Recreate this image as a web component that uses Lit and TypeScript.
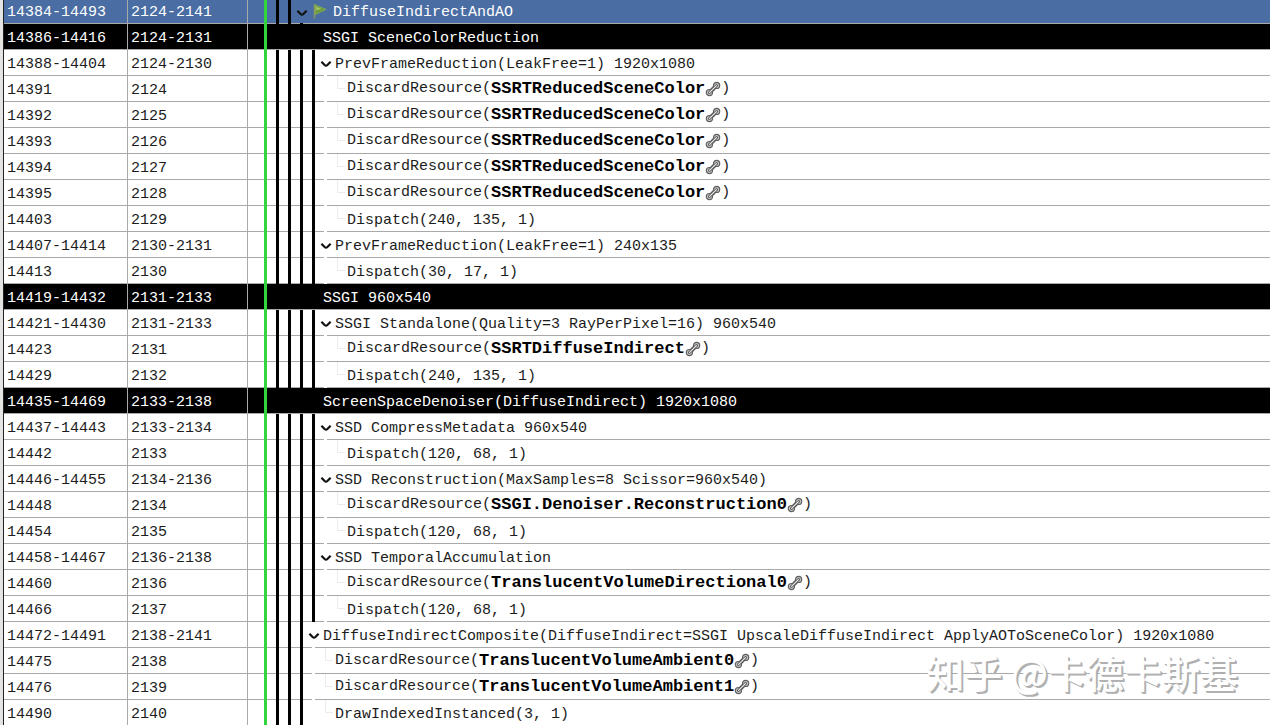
import { LitElement, html, svg, css, nothing } from "lit";
import { customElement, state } from "lit/decorators.js";
import { classMap } from "lit/directives/class-map.js";

type Kind = "root" | "marker" | "group" | "call";

interface EventRow {
  eid: string;
  draw: string;
  kind: Kind;
  rails: string;
  text: string;
  resource?: string;
}

const row = (eid: string, draw: string, kind: Kind, rails: string, text: string, resource?: string): EventRow => ({
  eid, draw, kind, rails, text, resource,
});

// Each rail letter is one ancestor level: k = black, w = white, "." = empty,
// s / v = a black / white rail that starts on the row's bottom line.
const GROUP = "kkkkv";
const LEAF = "kkkkw";
const REDUCED = "SSRTReducedSceneColor";

const EVENTS: EventRow[] = [
  row("14384-14493", "2124-2141", "root", "kks", "DiffuseIndirectAndAO"),
  row("14386-14416", "2124-2131", "marker", "....", "SSGI SceneColorReduction"),
  row("14388-14404", "2124-2130", "group", GROUP, "PrevFrameReduction(LeakFree=1) 1920x1080"),
  row("14391", "2124", "call", LEAF, "DiscardResource", REDUCED),
  row("14392", "2125", "call", LEAF, "DiscardResource", REDUCED),
  row("14393", "2126", "call", LEAF, "DiscardResource", REDUCED),
  row("14394", "2127", "call", LEAF, "DiscardResource", REDUCED),
  row("14395", "2128", "call", LEAF, "DiscardResource", REDUCED),
  row("14403", "2129", "call", LEAF, "Dispatch(240, 135, 1)"),
  row("14407-14414", "2130-2131", "group", GROUP, "PrevFrameReduction(LeakFree=1) 240x135"),
  row("14413", "2130", "call", LEAF, "Dispatch(30, 17, 1)"),
  row("14419-14432", "2131-2133", "marker", "....", "SSGI 960x540"),
  row("14421-14430", "2131-2133", "group", GROUP, "SSGI Standalone(Quality=3 RayPerPixel=16) 960x540"),
  row("14423", "2131", "call", LEAF, "DiscardResource", "SSRTDiffuseIndirect"),
  row("14429", "2132", "call", LEAF, "Dispatch(240, 135, 1)"),
  row("14435-14469", "2133-2138", "marker", "....", "ScreenSpaceDenoiser(DiffuseIndirect) 1920x1080"),
  row("14437-14443", "2133-2134", "group", GROUP, "SSD CompressMetadata 960x540"),
  row("14442", "2133", "call", LEAF, "Dispatch(120, 68, 1)"),
  row("14446-14455", "2134-2136", "group", GROUP, "SSD Reconstruction(MaxSamples=8 Scissor=960x540)"),
  row("14448", "2134", "call", LEAF, "DiscardResource", "SSGI.Denoiser.Reconstruction0"),
  row("14454", "2135", "call", LEAF, "Dispatch(120, 68, 1)"),
  row("14458-14467", "2136-2138", "group", GROUP, "SSD TemporalAccumulation"),
  row("14460", "2136", "call", LEAF, "DiscardResource", "TranslucentVolumeDirectional0"),
  row("14466", "2137", "call", LEAF, "Dispatch(120, 68, 1)"),
  row("14472-14491", "2138-2141", "group", "kkkv", "DiffuseIndirectComposite(DiffuseIndirect=SSGI UpscaleDiffuseIndirect ApplyAOToSceneColor) 1920x1080"),
  row("14475", "2138", "call", "kkkw", "DiscardResource", "TranslucentVolumeAmbient0"),
  row("14476", "2139", "call", "kkkw", "DiscardResource", "TranslucentVolumeAmbient1"),
  row("14490", "2140", "call", "kkkw", "DrawIndexedInstanced(3, 1)"),
];

const chevron = html`<svg class="chevron" viewBox="0 0 12 8" aria-hidden="true">
  <path d="M1.4 1.8 L4.6 5 Q6 6.2 7.4 5 L10.6 1.8" fill="none" stroke="currentColor" stroke-width="2.2" />
</svg>`;

const flag = html`<svg class="flag" viewBox="0 0 14 16" aria-hidden="true">
  <path d="M1.5 1 V15.5" stroke="#8a9a5a" stroke-width="1.5" />
  <path d="M2.5 2 L13 6.4 L2.5 11.4 Z" fill="#6c9a3c" stroke="#86ad55" stroke-width="0.8" />
  <path d="M3.2 3.6 L8.6 6 L3.2 7.2 Z" fill="#a3c565" />
</svg>`;

const link = html`<svg class="link" viewBox="0 0 16 16" aria-hidden="true">
  ${svg`
    <path d="M5 11 L11 5" stroke="#555" stroke-width="4" />
    <circle cx="11.6" cy="4.4" r="3.1" fill="#c4c4c4" stroke="#606060" stroke-width="1.2" />
    <circle cx="4.4" cy="11.6" r="3.1" fill="#c4c4c4" stroke="#606060" stroke-width="1.2" />
    <path d="M4.4 11.6 L11.6 4.4" stroke="#5a5a5a" stroke-width="2.8" stroke-linecap="round" />
    <path d="M4.6 11.4 L11.4 4.6" stroke="#ececec" stroke-width="1.2" stroke-linecap="round" />
  `}
</svg>`;

@customElement("app-root")
export class AppRoot extends LitElement {
  @state() private closed = new Set<string>();

  static styles = css`
    :host {
      display: block;
      position: relative;
      height: 100vh;
      overflow: hidden;
      background: #fff;
      font-family: "Liberation Mono", monospace;
      font-size: 15px;
      color: #1c1c1c;
    }
    .frame {
      border-left: 1px solid #222;
      margin-left: 3px;
      box-shadow: -3px 0 0 #e4e4e4;
    }
    table {
      width: 100%;
      table-layout: fixed;
      border-collapse: separate;
      border-spacing: 0;
    }
    .col-eid { width: 124px; }
    .col-draw { width: 120px; }
    td {
      height: 26px;
      padding: 0;
      box-sizing: border-box;
      line-height: 21px;
      white-space: pre;
      overflow: hidden;
    }
    .num {
      padding: 4px 0 0 3px;
      border-right: 1px solid #a9a9a9;
      border-bottom: 1px solid #a9a9a9;
    }
    .tree { box-shadow: inset 0 -1px 0 #a9a9a9; }
    .line {
      display: flex;
      align-items: center;
      height: 26px;
      padding-left: 16px;
    }
    .rail {
      flex: none;
      width: 12px;
      height: 100%;
      box-sizing: border-box;
    }
    .rail::before {
      content: "";
      display: block;
      width: 3px;
      height: 100%;
    }
    .rail.first::before { background: #32d63c; }
    .rail.k::before { background: #000; }
    .rail.w::before { background: #fff; }
    .rail.s, .rail.v { display: flex; align-items: flex-end; }
    .rail.s::before { height: 1px; background: #000; }
    .rail.v::before { height: 1px; background: #fff; }
    .elbow {
      flex: none;
      align-self: flex-start;
      width: 8px;
      height: 13px;
      margin-left: 1px;
      margin-right: 2px;
      box-sizing: border-box;
      border-left: 1px solid #ececec;
      border-bottom: 1px solid #ececec;
    }
    .label { padding-top: 3px; }
    .root td { height: 24px; background: #4a6da3; color: #fff; }
    .root .num { padding-top: 2px; }
    .root .line { height: 24px; }
    .root .label { padding-top: 1px; }
    .marker td { background: #000; color: #fff; }
    .marker .label { margin-left: -1px; }
    .toggle {
      flex: none;
      display: flex;
      width: 15px;
      height: 24px;
      margin-left: -16px;
      padding: 0;
      align-items: center;
      border: 0;
      background: none;
      color: #111;
      cursor: pointer;
    }
    .chevron { flex: none; width: 12px; height: 8px; margin-top: 2px; }
    .flag { flex: none; width: 14px; height: 16px; margin: 0 6px 2px 2px; }
    .call-line {
      display: flex;
      align-items: center;
      padding-bottom: 1px;
    }
    .resource {
      display: flex;
      align-items: center;
      font-size: 17px;
      font-weight: bold;
      color: #000;
      text-decoration: none;
    }
    .link { width: 16px; height: 16px; }
    .mark {
      position: absolute;
      right: 32px;
      bottom: 25px;
      font-family: "Noto Sans CJK SC", sans-serif;
      font-size: 38px;
      font-weight: 500;
      line-height: 56px;
      color: #fff;
      text-shadow: 1px 1px 0 #b0b0b0, 2px 2px 0 #b0b0b0;
      pointer-events: none;
    }
  `;

  private toggle(eid: string) {
    const next = new Set(this.closed);
    if (!next.delete(eid)) next.add(eid);
    this.closed = next;
  }

  private visibleRows(): EventRow[] {
    let hidden = false;
    const all = this.closed.has(EVENTS[0].eid);
    return EVENTS.filter((e, i) => {
      if (i === 0) return true;
      if (all) return false;
      if (e.kind !== "call") {
        hidden = this.closed.has(e.eid);
        return true;
      }
      return !hidden;
    });
  }

  private renderRow(e: EventRow) {
    const foldable = e.kind === "root" || e.kind === "group";
    return html`<tr class=${classMap({ [e.kind]: true })}>
      <td class="num">${e.eid}</td>
      <td class="num">${e.draw}</td>
      <td class="tree"><div class="line"><span class="rail first"></span>${[...e.rails].map(
        (r) => html`<span class="rail ${r === "." ? "" : r}"></span>`
      )}${foldable
        ? html`<button class="toggle" aria-label="Toggle ${e.text}" aria-expanded=${!this.closed.has(e.eid)}
            @click=${() => this.toggle(e.eid)}>${chevron}</button>`
        : nothing}${e.kind === "root" ? flag : nothing}${e.kind === "call"
        ? html`<span class="elbow"></span>`
        : nothing}${e.resource
        ? html`<span class="call-line">${e.text}(<a class="resource" href="#">${e.resource}${link}</a>)</span>`
        : html`<span class="label">${e.text}</span>`}</div></td>
    </tr>`;
  }

  render() {
    return html`
      <div class="frame">
        <table>
          <colgroup><col class="col-eid" /><col class="col-draw" /><col /></colgroup>
          <tbody>${this.visibleRows().map((e) => this.renderRow(e))}</tbody>
        </table>
      </div>
      <div class="mark">知乎 @卡德卡斯基</div>
    `;
  }
}
